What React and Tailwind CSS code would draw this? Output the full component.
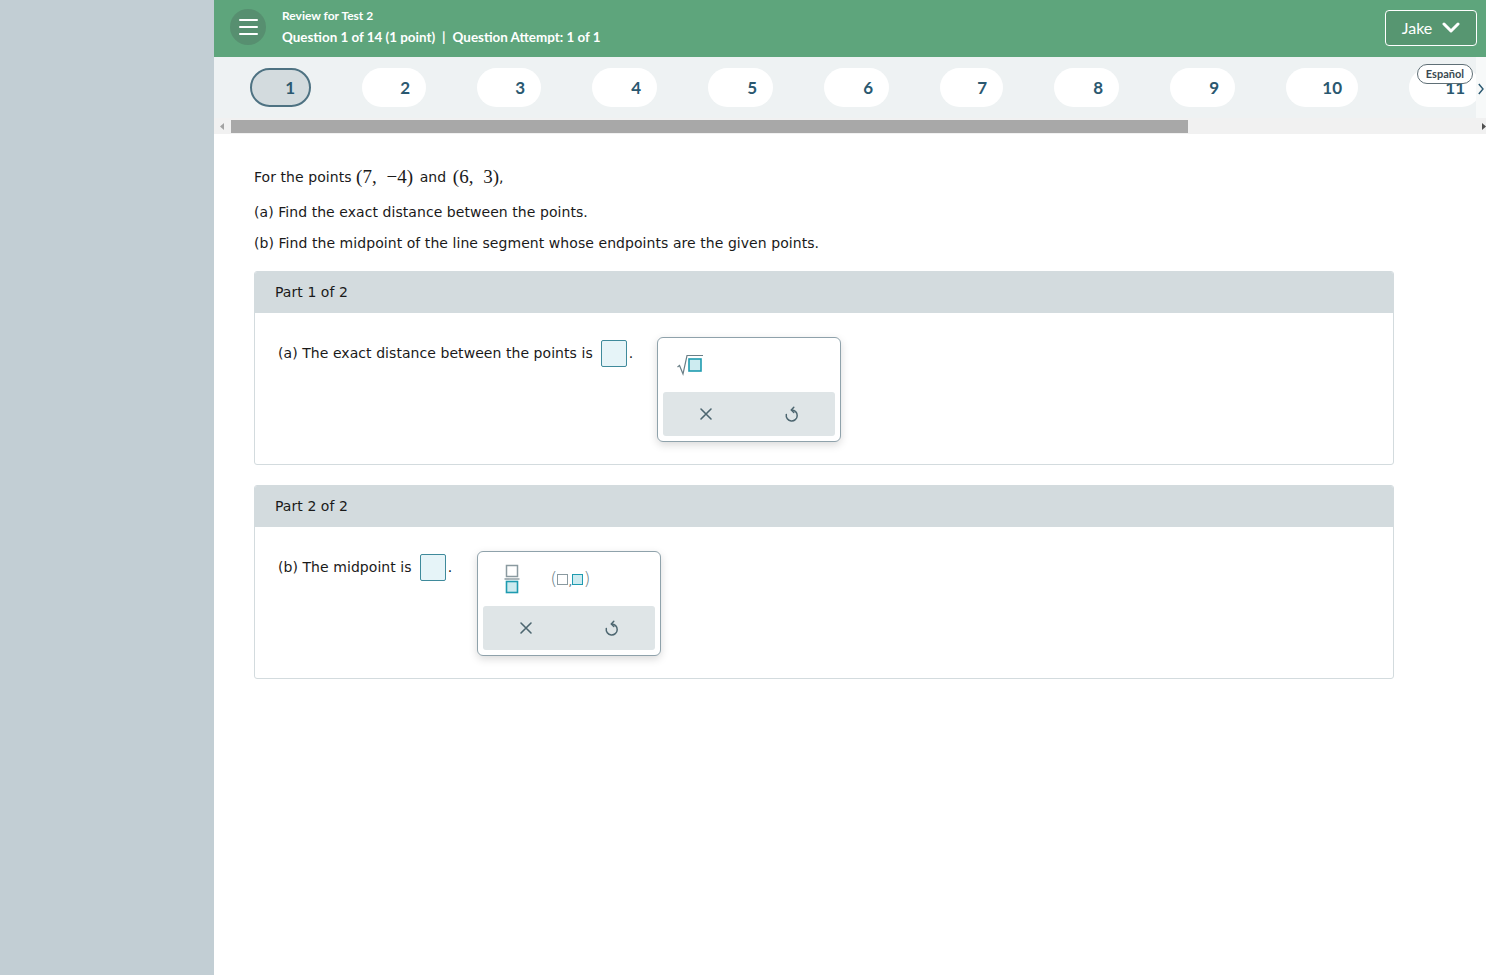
import React from "react";

const pills = [
  { n: "1", w: "w-[61px]", active: true },
  { n: "2", w: "w-[64px]" },
  { n: "3", w: "w-[64px]" },
  { n: "4", w: "w-[65px]" },
  { n: "5", w: "w-[65px]" },
  { n: "6", w: "w-[65px]" },
  { n: "7", w: "w-[63px]" },
  { n: "8", w: "w-[65px]" },
  { n: "9", w: "w-[65px]" },
  { n: "10", w: "w-[72px]" },
  { n: "11", w: "w-[72px]" },
];

function XIcon() {
  return (
    <svg width="14" height="14" viewBox="0 0 14 14" fill="none" stroke="#4d6670" strokeWidth="1.6" strokeLinecap="round">
      <path d="M2 2 L12 12 M12 2 L2 12" />
    </svg>
  );
}

function UndoIcon() {
  return (
    <svg width="16" height="20" viewBox="0 0 16 20" fill="none" stroke="#4d6670" strokeWidth="1.5" strokeLinecap="round" strokeLinejoin="round">
      <path d="M7.5 6 A5.5 5.5 0 1 1 2.3 10.5" />
      <path d="M9.8 3.3 L7.3 6 L9.8 8.5" />
    </svg>
  );
}

function Palette({ children, pl }) {
  return (
    <div className="w-[184px] h-[105px] rounded-[6px] border border-[#8fa2ab] bg-white shadow-[0_3px_8px_rgba(0,0,0,0.15)] flex flex-col px-[5px] pb-[5px]">
      <div className={`h-[54px] flex items-center ${pl}`}>{children}</div>
      <div className="flex-1 bg-[#dfe5e7] rounded-[3px] flex items-center justify-around">
        <XIcon />
        <UndoIcon />
      </div>
    </div>
  );
}

function SqrtIcon() {
  return (
    <svg width="28" height="24" viewBox="0 0 28 24" fill="none">
      <path d="M1.5 14 L3.5 12.5 L7 21 L11 2.5 L27 2.5" stroke="#6b7f87" strokeWidth="1.2" fill="none" />
      <rect x="13" y="6" width="12" height="12" fill="#cdebf0" stroke="#1e9bb0" strokeWidth="1.6" />
    </svg>
  );
}

function FracIcon() {
  return (
    <svg width="16" height="30" viewBox="0 0 16 30" fill="none">
      <rect x="2.5" y="1.5" width="11" height="11" fill="#fff" stroke="#8a9aa0" strokeWidth="1.5" />
      <line x1="0.5" y1="15" x2="15.5" y2="15" stroke="#8a9aa0" strokeWidth="1.4" />
      <rect x="2.5" y="17.5" width="11" height="11" fill="#cdebf0" stroke="#1e9bb0" strokeWidth="1.6" />
    </svg>
  );
}

function PointIcon() {
  return (
    <div className="flex items-center text-[#6b7f87] text-[18px] leading-none" style={{ fontFamily: '"DejaVu Sans", sans-serif' }}>
      <span className="font-light">(</span>
      <span className="inline-block w-[11px] h-[11px] border-[1.5px] border-[#8a9aa0] bg-white"></span>
      <span className="text-[13px] mt-[5px]">,</span>
      <span className="inline-block w-[11px] h-[11px] border-[1.5px] border-[#1e9bb0] bg-[#cdebf0]"></span>
      <span className="font-light">)</span>
    </div>
  );
}

function InputBox() {
  return <span className="inline-block w-[26px] h-[27px] rounded-[2px] border border-[#3f8a9b] bg-[#e6f4f8] align-middle ml-[8px] mr-[8px]"></span>;
}

export default function App() {
  const verdana = { fontFamily: '"DejaVu Sans", Verdana, sans-serif' };
  const proxima = { fontFamily: 'Lato, "Open Sans", sans-serif' };
  const serif = { fontFamily: '"Liberation Serif", "DejaVu Serif", serif' };
  return (
    <div className="flex w-[1486px] h-[975px] overflow-hidden bg-white">
      <div className="w-[214px] shrink-0 bg-[#c2ced4]" />
      <div className="flex-1 flex flex-col min-w-0">
        {/* header */}
        <div className="h-[57px] bg-[#5ea57c] flex items-center pl-[16px] pr-[9px]" style={proxima}>
          <div className="w-[36px] h-[36px] rounded-full bg-[#578f70] flex flex-col items-center justify-center gap-[5px] -mt-[4px]">
            <span className="block w-[19px] h-[2px] bg-white rounded" />
            <span className="block w-[19px] h-[2px] bg-white rounded" />
            <span className="block w-[19px] h-[2px] bg-white rounded" />
          </div>
          <div className="ml-[16px] text-white flex flex-col -mt-[4px]">
            <div className="text-[12px] font-bold leading-[14px]">Review for Test 2</div>
            <div className="text-[13.4px] font-bold leading-[16px] mt-[6px]">
              Question 1 of 14 (1 point)<span className="mx-[7px]">|</span>Question Attempt: 1 of 1
            </div>
          </div>
          <div className="ml-auto w-[92px] h-[36px] rounded-[4px] border border-white bg-[#579671] flex items-center justify-center gap-[10px] text-white text-[16px] -mt-[2px]">
            <span>Jake</span>
            <svg width="18" height="12" viewBox="0 0 18 12" fill="none" stroke="white" strokeWidth="3" strokeLinecap="round" strokeLinejoin="round">
              <path d="M2 2 L9 9 L16 2" />
            </svg>
          </div>
        </div>
        {/* pills row */}
        <div className="relative h-[61px] bg-[#eef2f3] overflow-hidden">
          <div className="flex items-center gap-[51px] pl-[36px] pt-[11px]" style={proxima}>
            {pills.map((p) => (
              <div
                key={p.n}
                className={`${p.w} h-[39px] shrink-0 rounded-full flex items-center justify-end text-[17px] font-bold text-[#2a5870] ${
                  p.active ? "bg-[#d3dbde] border-2 border-[#4e7282] pr-[14px]" : "bg-white pr-[16px]"
                }`}
              >
                {p.n}
              </div>
            ))}
          </div>
          <div className="absolute right-0 top-0 w-[10px] h-full bg-[#f7f9f9] flex items-center justify-center pt-[2px]">
            <svg width="6" height="12" viewBox="0 0 6 12" fill="none" stroke="#2a5870" strokeWidth="1.4">
              <path d="M0.8 1 L5 6 L0.8 11" />
            </svg>
          </div>
          <div className="absolute right-[13px] top-[7px] px-[8px] h-[20px] rounded-full border border-[#5f6f76] bg-white flex items-center text-[11px] font-bold text-[#3a4a52]" style={proxima}>
            Español
          </div>
        </div>
        {/* scrollbar */}
        <div className="h-[16px] bg-[#f1f1f1] flex items-center">
          <div className="w-[17px] flex items-center justify-center">
            <svg width="5" height="7" viewBox="0 0 5 7"><path d="M4 0 L0 3.5 L4 7 Z" fill="#a3a3a3" /></svg>
          </div>
          <div className="w-[957px] h-[13px] bg-[#a8a8a8]" />
          <div className="flex-1" />
          <div className="w-[4px] flex items-center">
            <svg width="4" height="7" viewBox="0 0 4 7"><path d="M0 0 L4 3.5 L0 7 Z" fill="#505050" /></svg>
          </div>
        </div>
        {/* content */}
        <div className="pl-[40px] pt-[28px] text-[14px] text-[#1a1a1a] tracking-[0.06px]" style={verdana}>
          <div className="h-[30px] flex items-center">
            For the points&nbsp;
            <span className="text-[19px] mr-[2px]" style={serif}>(7,&nbsp;&nbsp;−4)</span>
            &nbsp;and&nbsp;
            <span className="text-[19px] ml-[2px]" style={serif}>(6,&nbsp;&nbsp;3)</span>,
          </div>
          <div className="mt-[10px] h-[20px] flex items-center">(a) Find the exact distance between the points.</div>
          <div className="mt-[11px] h-[20px] flex items-center">(b) Find the midpoint of the line segment whose endpoints are the given points.</div>

          <div className="mt-[18px] w-[1140px] rounded-[3px] border border-[#d3dbde] overflow-hidden">
            <div className="h-[41px] bg-[#d3dbde] flex items-center pl-[20px]">Part 1 of 2</div>
            <div className="h-[151px] flex pl-[23px] pt-[24px]">
              <div className="flex items-center h-[29px] mt-[2px]">
                (a) The exact distance between the points is<InputBox /><span className="-ml-[6px]">.</span>
              </div>
              <div className="ml-[24px]">
                <Palette pl="pl-[13px]">
                  <SqrtIcon />
                </Palette>
              </div>
            </div>
          </div>

          <div className="mt-[20px] w-[1140px] rounded-[3px] border border-[#d3dbde] overflow-hidden">
            <div className="h-[41px] bg-[#d3dbde] flex items-center pl-[20px]">Part 2 of 2</div>
            <div className="h-[151px] flex pl-[23px] pt-[24px]">
              <div className="flex items-center h-[29px] mt-[2px]">
                (b) The midpoint is<InputBox /><span className="-ml-[6px]">.</span>
              </div>
              <div className="ml-[25px]">
                <Palette pl="pl-[21px] gap-[30px]">
                  <FracIcon />
                  <PointIcon />
                </Palette>
              </div>
            </div>
          </div>
        </div>
      </div>
    </div>
  );
}
